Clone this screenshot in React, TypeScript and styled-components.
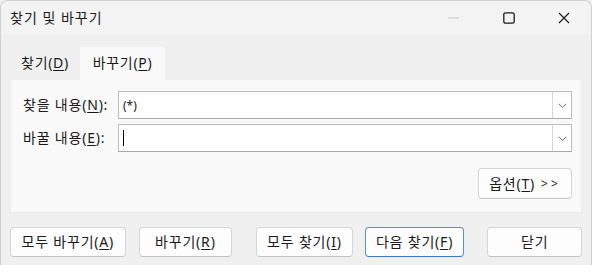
import React from "react";
import styled, { createGlobalStyle } from "styled-components";

const GlobalStyle = createGlobalStyle`
  html, body { margin: 0; padding: 0; background: #f0f0f0; }
  body { font-family: "Noto Sans", "Noto Sans CJK KR", sans-serif; }
  * { box-sizing: border-box; }
`;

const Window = styled.div`
  width: 592px;
  height: 265px;
  background: #f0f0f0;
  border: 1px solid #cfcfcf;
  border-bottom: none;
  border-radius: 8px 8px 0 0;
  overflow: hidden;
  display: flex;
  flex-direction: column;
  color: #1a1a1a;
`;

const TitleBar = styled.div`
  height: 34px;
  flex: none;
  display: flex;
  align-items: center;
  background: #f3f3f3;
  padding-left: 9px;
`;

const Title = styled.div`
  flex: 1;
  font-size: 14px;
  line-height: 18px;
  color: #1c1c1c;
  letter-spacing: 1px;
`;

const Caption = styled.div`
  width: 55px;
  height: 34px;
  display: flex;
  align-items: center;
  justify-content: center;
`;

const Body = styled.div`
  flex: 1;
  display: flex;
  flex-direction: column;
  padding: 12px 9px 0 9px;
`;

const TabStrip = styled.div`
  display: flex;
  height: 33px;
`;

const Tab = styled.div<{ $active?: boolean; $width: number }>`
  width: ${(p) => p.$width}px;
  height: 33px;
  display: flex;
  align-items: center;
  justify-content: center;
  font-size: 14px;
  line-height: 18px;
  background: ${(p) => (p.$active ? "#f9f9f9" : "transparent")};
  color: #1a1a1a;
  padding-bottom: 1px;
  letter-spacing: 0.7px;
`;

const Panel = styled.div`
  background: #f9f9f9;
  border: 1px solid #ececec;
  border-top: none;
  height: 133px;
  padding: 11px 9px 0 12px;
  display: flex;
  flex-direction: column;
`;

const Row = styled.div`
  display: flex;
  align-items: center;
  height: 28px;
  margin-bottom: 5px;
`;

const Label = styled.div`
  width: 95px;
  font-size: 14px;
  line-height: 18px;
  color: #1a1a1a;
  letter-spacing: 0.8px;
  white-space: nowrap;
`;

const Combo = styled.div`
  flex: 1;
  height: 28px;
  display: flex;
  background: #ffffff;
  border: 1px solid #bdbdbd;
  border-bottom-color: #a8a8a8;
`;

const ComboText = styled.div`
  flex: 1;
  display: flex;
  align-items: center;
  padding-left: 4px;
  font-size: 12px;
  color: #1a1a1a;
`;

const Caret = styled.div`
  width: 1px;
  height: 16px;
  background: #000;
`;

const DropButton = styled.div`
  width: 19px;
  border-left: 1px solid #d6d6d6;
  display: flex;
  align-items: center;
  justify-content: center;
`;

const OptionsRow = styled.div`
  display: flex;
  justify-content: flex-end;
  margin-top: 11px;
`;

const Button = styled.div<{ $width: number; $default?: boolean }>`
  width: ${(p) => p.$width}px;
  height: 30px;
  display: flex;
  align-items: center;
  justify-content: center;
  background: #fdfdfd;
  border: 1px solid ${(p) => (p.$default ? "#5b8fd6" : "#d5d5d5")};
  border-bottom-color: ${(p) => (p.$default ? "#3d78cc" : "#c2c2c2")};
  border-radius: 4px;
  font-size: 14px;
  line-height: 18px;
  color: #1a1a1a;
  letter-spacing: 0.8px;
  white-space: nowrap;
`;

const OptionsButton = styled(Button)`
  height: 31px;
`;

const Arrows = styled.span`
  margin-left: 6px;
  letter-spacing: 3px;
  font-size: 12px;
`;

const ButtonBar = styled.div`
  display: flex;
  align-items: center;
  margin-top: 14px;
  height: 30px;
`;

const Gap = styled.div<{ $w: number }>`
  width: ${(p) => p.$w}px;
  flex: none;
`;

const Key = styled.span`
  text-decoration: underline;
  text-underline-offset: 1.5px;
`;

const Chevron = () => (
  <svg width="9" height="5" viewBox="0 0 9 5">
    <path d="M0.8 0.8 L4.5 4.3 L8.2 0.8" fill="none" stroke="#6a6a6a" strokeWidth="1" />
  </svg>
);

export default function App() {
  return (
    <>
      <GlobalStyle />
      <Window>
        <TitleBar>
          <Title>찾기 및 바꾸기</Title>
          <Caption>
            <svg width="11" height="2" viewBox="0 0 11 2">
              <rect x="0" y="0.5" width="11" height="1" fill="#c8c8c8" />
            </svg>
          </Caption>
          <Caption>
            <svg width="12" height="12" viewBox="0 0 12 12">
              <rect x="0.8" y="0.8" width="10.4" height="10.4" rx="1.8" fill="none" stroke="#1a1a1a" strokeWidth="1.3" />
            </svg>
          </Caption>
          <Caption>
            <svg width="12" height="12" viewBox="0 0 12 12">
              <path d="M1 1 L11 11 M11 1 L1 11" stroke="#1a1a1a" strokeWidth="1.1" />
            </svg>
          </Caption>
        </TitleBar>
        <Body>
          <TabStrip>
            <Tab $width={70}>
              찾기(<Key>D</Key>)
            </Tab>
            <Tab $width={85} $active>
              바꾸기(<Key>P</Key>)
            </Tab>
          </TabStrip>
          <Panel>
            <Row>
              <Label>
                찾을 내용(<Key>N</Key>):
              </Label>
              <Combo>
                <ComboText>(*)</ComboText>
                <DropButton>
                  <Chevron />
                </DropButton>
              </Combo>
            </Row>
            <Row>
              <Label>
                바꿀 내용(<Key>E</Key>):
              </Label>
              <Combo>
                <ComboText>
                  <Caret />
                </ComboText>
                <DropButton>
                  <Chevron />
                </DropButton>
              </Combo>
            </Row>
            <OptionsRow>
              <OptionsButton $width={94}>
                옵션(<Key>T</Key>)<Arrows>&gt;&gt;</Arrows>
              </OptionsButton>
            </OptionsRow>
          </Panel>
          <ButtonBar>
            <Button $width={116}>
              모두 바꾸기(<Key>A</Key>)
            </Button>
            <Gap $w={13} />
            <Button $width={94}>
              바꾸기(<Key>R</Key>)
            </Button>
            <Gap $w={24} />
            <Button $width={97}>
              모두 찾기(<Key>I</Key>)
            </Button>
            <Gap $w={12} />
            <Button $width={100} $default>
              다음 찾기(<Key>F</Key>)
            </Button>
            <Gap $w={23} />
            <Button $width={95}>닫기</Button>
          </ButtonBar>
        </Body>
      </Window>
    </>
  );
}
